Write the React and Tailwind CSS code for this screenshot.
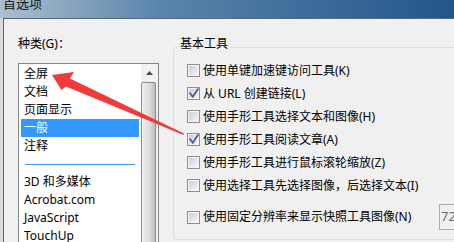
import React from "react";

const categories = ["全屏", "文档", "页面显示", "一般", "注释"];
const moreCategories = ["3D 和多媒体", "Acrobat.com", "JavaScript", "TouchUp"];

const options = [
  { label: "使用单键加速键访问工具(K)", checked: false },
  { label: "从 URL 创建链接(L)", checked: true },
  { label: "使用手形工具选择文本和图像(H)", checked: false },
  { label: "使用手形工具阅读文章(A)", checked: true },
  { label: "使用手形工具进行鼠标滚轮缩放(Z)", checked: false },
  { label: "使用选择工具先选择图像，后选择文本(I)", checked: false },
];

function CheckBox({ checked }) {
  return (
    <span className="relative flex h-[13px] w-[13px] shrink-0 items-center justify-center border border-[#8e8f8f] bg-[#f4f4f4]">
      <span className="h-[9px] w-[9px] bg-linear-to-br from-[#cbcfd5] to-[#f6f6f6]" />
      {checked && (
        <svg className="absolute left-[-1px] top-[-1px]" width="13" height="13" viewBox="0 0 13 13">
          <path d="M2.5 5.5 L5.8 9.8 L11.3 1.5" fill="none" stroke="#4b5a9c" strokeWidth="1.8" />
        </svg>
      )}
    </span>
  );
}

export default function App() {
  return (
    <div className="relative flex h-[242px] w-[454px] flex-col overflow-hidden bg-[#f0f0f0] font-['Noto_Sans','Noto_Sans_CJK_SC',sans-serif] text-[12px] text-black">
      {/* title bar */}
      <div className="h-[18px] shrink-0 overflow-hidden bg-linear-to-r from-[#aebfce] via-[#5a84ab] via-35% to-[#23568a] pl-[3px]">
        <div className="-mt-[3px] text-[13px] leading-[13px] text-[#111]">首选项</div>
      </div>

      {/* window body */}
      <div className="flex flex-1 bg-[#d6dbe0] pl-[3px]">
        <div className="flex flex-1 border-l border-t border-[#56677a] bg-[#f0f0f0]">
          {/* left: categories */}
          <div className="flex w-[155px] shrink-0 flex-col pl-[14px]">
            <div className="mt-[17px] leading-[16px]">种类(G)：</div>
            <div className="mt-[11px] flex h-[200px] w-[141px] border border-[#828790] bg-white">
              <div className="flex w-[122px] flex-col px-[2px] pt-[1px]">
                {categories.map((c) => (
                  <div
                    key={c}
                    className={
                      c === "一般"
                        ? "h-[18px] bg-[#3399ff] pl-[3px] leading-[18px] text-white"
                        : "h-[18px] pl-[3px] leading-[18px]"
                    }
                  >
                    {c}
                  </div>
                ))}
                <div className="flex h-[18px] items-center px-[4px]">
                  <div className="h-px w-full bg-[#3d98f0]" />
                </div>
                {moreCategories.map((c) => (
                  <div key={c} className="h-[18px] pl-[3px] leading-[18px]">
                    {c}
                  </div>
                ))}
              </div>
              {/* scrollbar */}
              <div className="flex w-[17px] flex-col bg-[#ededed]">
                <div className="flex h-[17px] items-center justify-center bg-[#f2f2f2]">
                  <svg width="7" height="4" viewBox="0 0 7 4">
                    <path d="M3.5 0 L7 4 L0 4 Z" fill="#4a4a4a" />
                  </svg>
                </div>
                <div className="mr-[2px] mt-[1px] flex-1 rounded-t-[2px] border border-[#8c8c8c] bg-linear-to-r from-[#f0f0f0] via-[#dadada] via-60% to-[#bdbdbd]" />
              </div>
            </div>
          </div>

          {/* right: basic tools */}
          <fieldset className="mt-[17px] ml-[14px] h-[204px] w-[300px] shrink-0 rounded-[3px] border border-[#d5dfe5]">
            <legend className="ml-[4px] px-[2px] pb-[6px] leading-[16px]">基本工具</legend>
            <div className="flex flex-col pl-[13px] pt-[1px]">
              {options.map((o) => (
                <div key={o.label} className="flex h-[23px] items-center gap-[3px]">
                  <CheckBox checked={o.checked} />
                  <span className="whitespace-nowrap">{o.label}</span>
                </div>
              ))}
              <div className="mt-[7px] flex h-[26px] items-center gap-[3px]">
                <CheckBox checked={false} />
                <span className="w-[233px] shrink-0 whitespace-nowrap">使用固定分辨率来显示快照工具图像(N)</span>
                <div className="flex h-[26px] w-[60px] shrink-0 items-center border border-[#adadad] bg-[#f0f0f0] pl-[1px] text-[13px] text-[#6d6d6d]">
                  72
                </div>
              </div>
            </div>
          </fieldset>
        </div>
      </div>

      {/* red annotation arrow */}
      <svg className="pointer-events-none absolute left-0 top-0" width="454" height="242" viewBox="0 0 454 242">
        <polygon
          points="52,75 74,72 70,78.5 184,133.5 183.5,135 66,86.5 61.5,90"
          fill="#f03b3b"
        />
      </svg>
    </div>
  );
}
